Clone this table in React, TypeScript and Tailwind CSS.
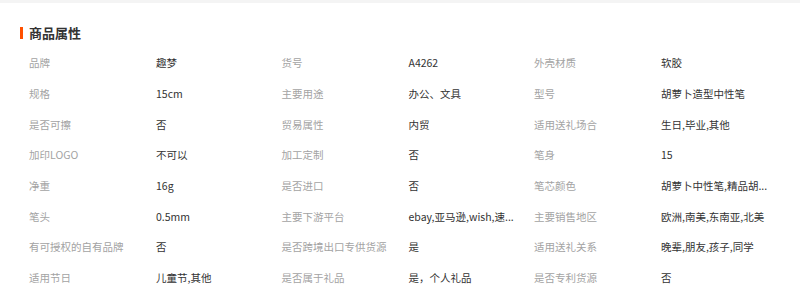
import React from "react";

const rows: [string, string, string, string, string, string][] = [
  ["品牌", "趣梦", "货号", "A4262", "外壳材质", "软胶"],
  ["规格", "15cm", "主要用途", "办公、文具", "型号", "胡萝卜造型中性笔"],
  ["是否可擦", "否", "贸易属性", "内贸", "适用送礼场合", "生日,毕业,其他"],
  ["加印LOGO", "不可以", "加工定制", "否", "笔身", "15"],
  ["净重", "16g", "是否进口", "否", "笔芯颜色", "胡萝卜中性笔,精品胡..."],
  ["笔头", "0.5mm", "主要下游平台", "ebay,亚马逊,wish,速...", "主要销售地区", "欧洲,南美,东南亚,北美"],
  ["有可授权的自有品牌", "否", "是否跨境出口专供货源", "是", "适用送礼关系", "晚辈,朋友,孩子,同学"],
  ["适用节日", "儿童节,其他", "是否属于礼品", "是，个人礼品", "是否专利货源", "否"],
];

export default function App() {
  return (
    <div
      className="w-[800px] h-[301px] bg-white overflow-hidden"
      style={{ fontFamily: '"Noto Sans CJK SC", "Noto Sans", sans-serif' }}
    >
      <div className="h-[3px] bg-[#f4f4f4]" />
      <div className="mt-[20px] h-[20px] flex items-center pl-[20px]">
        <div className="w-[3px] h-[12px] bg-[#ff5000]" />
        <div className="ml-[6px] text-[13px] font-bold text-[#333] leading-[20px]">商品属性</div>
      </div>
      <div className="mt-[5px] pl-[29px] grid grid-cols-[127px_125.5px_127px_125.5px_127px_125.5px]">
        {rows.map((r, i) => (
          <React.Fragment key={i}>
            {r.map((c, j) => (
              <div
                key={j}
                className={
                  "h-[30.7px] flex items-center text-[10.5px] whitespace-nowrap " +
                  (j % 2 === 0 ? "text-[#a3a3a3]" : "text-[#333]")
                }
              >
                <span className="leading-[14px]">{c}</span>
              </div>
            ))}
          </React.Fragment>
        ))}
      </div>
    </div>
  );
}
